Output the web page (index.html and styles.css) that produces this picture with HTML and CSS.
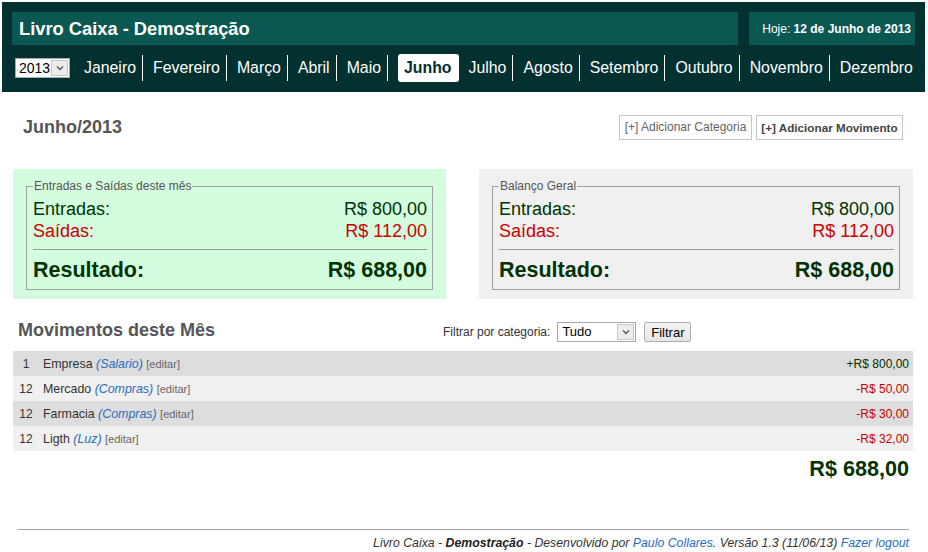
FILE: index.html
```html
<!DOCTYPE html>
<html lang="pt-BR">
<head>
<meta charset="utf-8">
<title>Livro Caixa - Demostração</title>
<link rel="stylesheet" href="styles.css">
</head>
<body>
<div class="page">
  <header class="top">
    <div class="top-row">
      <h1 class="title">Livro Caixa - Demostração</h1>
      <div class="today"><span>Hoje: <b>12 de Junho de 2013</b></span></div>
    </div>
    <nav class="months">
      <div class="fake-select year-select">
        <span class="fs-value">2013</span>
        <span class="fs-arrow"><svg width="8" height="6" viewBox="0 0 8 6"><path d="M1 1.5 L4 4.5 L7 1.5" fill="none" stroke="#555" stroke-width="1.4"/></svg></span>
      </div>
      <a class="month" href="#">Janeiro</a>
      <a class="month" href="#">Fevereiro</a>
      <a class="month" href="#">Março</a>
      <a class="month" href="#">Abril</a>
      <a class="month" href="#">Maio</a>
      <a class="month active" href="#">Junho</a>
      <a class="month" href="#">Julho</a>
      <a class="month" href="#">Agosto</a>
      <a class="month" href="#">Setembro</a>
      <a class="month" href="#">Outubro</a>
      <a class="month" href="#">Novembro</a>
      <a class="month last" href="#">Dezembro</a>
    </nav>
  </header>

  <main class="content">
    <div class="head-row">
      <h2 class="period">Junho/2013</h2>
      <div class="actions">
        <a class="btn-link cat-btn" href="#">[+] Adicionar Categoria</a>
        <a class="btn-link mov-btn" href="#">[+] Adicionar Movimento</a>
      </div>
    </div>

    <div class="summaries">
      <div class="summary green">
        <fieldset class="sum-set">
          <legend>Entradas e Saídas deste mês</legend>
          <div class="sum-line in"><span>Entradas:</span><span>R$ 800,00</span></div>
          <div class="sum-line out"><span>Saídas:</span><span>R$ 112,00</span></div>
          <div class="sum-sep"></div>
          <div class="sum-line result"><span>Resultado:</span><span>R$ 688,00</span></div>
        </fieldset>
      </div>
      <div class="summary gray">
        <fieldset class="sum-set">
          <legend>Balanço Geral</legend>
          <div class="sum-line in"><span>Entradas:</span><span>R$ 800,00</span></div>
          <div class="sum-line out"><span>Saídas:</span><span>R$ 112,00</span></div>
          <div class="sum-sep"></div>
          <div class="sum-line result"><span>Resultado:</span><span>R$ 688,00</span></div>
        </fieldset>
      </div>
    </div>

    <div class="mov-head">
      <h2 class="mov-title">Movimentos deste Mês</h2>
      <div class="filter">
        <span class="filter-label">Filtrar por categoria:</span>
        <div class="fake-select cat-select">
          <span class="fs-value">Tudo</span>
          <span class="fs-arrow"><svg width="8" height="6" viewBox="0 0 8 6"><path d="M1 1.5 L4 4.5 L7 1.5" fill="none" stroke="#555" stroke-width="1.4"/></svg></span>
        </div>
        <button class="filter-btn" type="button">Filtrar</button>
      </div>
    </div>

    <table class="movs">
      <tr class="odd">
        <td class="day">1</td>
        <td class="desc">Empresa <a class="cat" href="#">(Salario)</a> <a class="edit" href="#">[editar]</a></td>
        <td class="val pos">+R$ 800,00</td>
      </tr>
      <tr class="even">
        <td class="day">12</td>
        <td class="desc">Mercado <a class="cat" href="#">(Compras)</a> <a class="edit" href="#">[editar]</a></td>
        <td class="val neg">-R$ 50,00</td>
      </tr>
      <tr class="odd">
        <td class="day">12</td>
        <td class="desc">Farmacia <a class="cat" href="#">(Compras)</a> <a class="edit" href="#">[editar]</a></td>
        <td class="val neg">-R$ 30,00</td>
      </tr>
      <tr class="even">
        <td class="day">12</td>
        <td class="desc">Ligth <a class="cat" href="#">(Luz)</a> <a class="edit" href="#">[editar]</a></td>
        <td class="val neg">-R$ 32,00</td>
      </tr>
    </table>

    <div class="total">R$ 688,00</div>

    <footer class="foot">
      <div class="foot-rule"></div>
      <p class="foot-text">Livro Caixa - <b>Demostração</b> - Desenvolvido por <a href="#">Paulo Collares</a>. Versão 1.3 (11/06/13) <a href="#">Fazer logout</a></p>
    </footer>
  </main>
</div>
</body>
</html>
```

FILE: styles.css
```css
* { box-sizing: border-box; }
html, body { margin: 0; padding: 0; background: #fff; }
body {
  font-family: "Liberation Sans", Arial, sans-serif;
  font-size: 12px;
  color: #333;
}
a { text-decoration: none; }

.page {
  margin: 2px 0 0 2px;
  width: 923px;
}

/* Header */
.top {
  background: #03312f;
  padding: 10px;
}
.top-row {
  display: flex;
  gap: 11px;
  height: 33px;
}
.title {
  margin: 0;
  width: 726px;
  background: #0b5853;
  color: #fff;
  font-size: 18.3px;
  font-weight: bold;
  display: flex;
  align-items: center;
  padding-left: 7px;
}
.today {
  flex: 1;
  background: #0b5853;
  color: #fff;
  font-size: 12px;
  display: flex;
  align-items: center;
  justify-content: flex-end;
  padding-right: 4px;
}
.months {
  display: flex;
  align-items: center;
  margin-top: 9px;
  height: 28px;
}
.month {
  color: #fff;
  font-size: 15.85px;
  line-height: 26px;
  height: 26px;
  padding: 0 6px;
  border-right: 1px solid #fff;
  margin-right: 4px;
}
.month.active {
  background: #fff;
  color: #03312f;
  font-weight: bold;
  border-right-color: #fff;
  border-radius: 3px;
  margin-left: 6px;
  height: 28px;
  line-height: 28px;
}
.month.last { border-right: none; }

/* fake select */
.fake-select {
  display: flex;
  align-items: stretch;
  background: #fff;
  border: 1px solid #a9a9a9;
  height: 20px;
}
.fs-value {
  flex: 1;
  color: #000;
  font-size: 14px;
  line-height: 18px;
  padding-left: 3px;
}
.fs-arrow {
  width: 17px;
  margin: 1px;
  background: #ececec;
  border: 1px solid #c8c8c8;
  display: flex;
  align-items: center;
  justify-content: center;
}
.year-select {
  width: 55px;
  margin-left: 3px;
  margin-right: 8px;
}

/* Content */
.content {
  padding: 0 12px 0 11px;
}
.head-row {
  display: flex;
  justify-content: space-between;
  align-items: center;
  margin-top: 23px;
  height: 25px;
}
.period {
  margin: 0 0 0 10px;
  font-size: 18px;
  color: #555;
  font-weight: bold;
}
.actions {
  display: flex;
  gap: 4px;
  margin-right: 10px;
}
.btn-link {
  display: block;
  height: 25px;
  line-height: 23px;
  padding: 0;
  text-align: center;
  white-space: nowrap;
  border: 1px solid #c4c4c4;
  color: #666;
  font-size: 12px;
}
.cat-btn { width: 133px; }
.mov-btn { width: 147px; font-weight: bold; color: #444; font-size: 11.7px; }

.summaries {
  display: flex;
  justify-content: space-between;
  margin-top: 29px;
}
.summary {
  width: 433px;
  height: 130px;
  padding: 10px 13px 0 13px;
}
.summary.gray { width: 434px; background: #f0f0f0; }
.summary.green { background: #d4fde0; }
.sum-set {
  margin: 0;
  padding: 5px 5px 6px 6px;
  border: 1px solid #a0a0a0;
  min-width: 0;
}
.sum-set legend {
  padding: 0 1px;
  font-size: 12px;
  line-height: 14px;
  color: #555;
}
.sum-line {
  display: flex;
  justify-content: space-between;
  font-size: 18px;
  line-height: 22px;
}
.sum-line.in { color: #003300; }
.sum-line.out { color: #cc0000; }
.sum-line.result {
  font-size: 21.5px;
  line-height: 26px;
  font-weight: bold;
  color: #003300;
}
.sum-sep {
  border-top: 1px solid #999;
  margin: 7px 0 7px 0;
}

.mov-head {
  display: flex;
  align-items: flex-start;
  margin-top: 20px;
  height: 32px;
}
.mov-title {
  flex: 0 0 430px;
  margin: 0;
  padding-left: 5px;
  font-size: 18px;
  line-height: 22px;
  font-weight: bold;
  color: #555;
}
.filter {
  display: flex;
  align-items: center;
  margin-top: 3px;
}
.filter-label { font-size: 12px; color: #333; }
.cat-select { width: 79px; margin-left: 7px; }
.cat-select .fs-value { font-size: 13px; padding-left: 4px; }
.filter-btn {
  margin-left: 8px;
  width: 47px;
  height: 20px;
  padding: 0;
  font-family: "Liberation Sans", Arial, sans-serif;
  font-size: 13px;
  color: #000;
  background: linear-gradient(#f4f4f4, #e6e6e6);
  border: 1px solid #adadad;
  border-radius: 2px;
}

.movs {
  width: 100%;
  border-collapse: collapse;
}
.movs td {
  height: 25px;
  padding: 0;
  vertical-align: middle;
  font-size: 12px;
}
.movs tr.odd { background: #dddddd; }
.movs tr.even { background: #f0f0f0; }
.movs .day { width: 26px; text-align: center; color: #333; }
.movs .desc { padding-left: 4px; color: #333; font-size: 12.4px; }
.movs .cat { color: #2a6cc0; font-style: italic; }
.movs .edit { color: #666; font-size: 11px; }
.movs .val { text-align: right; padding-right: 4px; }
.movs .val.pos { color: #003300; }
.movs .val.neg { color: #cc0000; }

.total {
  margin-top: 5px;
  text-align: right;
  padding-right: 4px;
  font-size: 21.6px;
  line-height: 26px;
  font-weight: bold;
  color: #003300;
}

.foot { margin-top: 47px; }
.foot-rule {
  margin: 0 4px 0 5px;
  border-top: 1px solid #a0a0a0;
}
.foot-text {
  margin: 6px 4px 0 0;
  text-align: right;
  font-style: italic;
  font-size: 12.3px;
  line-height: 14px;
  color: #333;
}
.foot-text a { color: #2a6cc0; }
.foot-text b { color: #222; }
```
